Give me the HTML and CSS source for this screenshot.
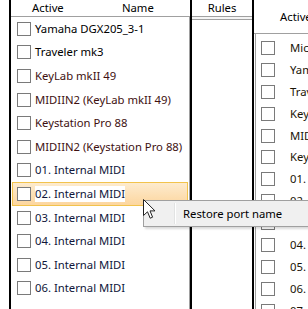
FILE: index.html
```html
<!DOCTYPE html>
<html lang="en">
<head>
  <meta charset="UTF-8" />
  <meta name="viewport" content="width=device-width, initial-scale=1.0"/>
  <title>MIDI Ports</title>
  <link rel="stylesheet" href="styles.css">
</head>
<body>
  <div class="window">
    <div class="gutter"></div>
    <div class="split"></div>

    <!-- Input ports -->
    <div class="panel ports">
      <div class="head">
        <span class="col-active">Active</span>
        <span>Name</span>
      </div>
      <div class="list">
        <div class="row"><span class="check"></span><span class="label">Yamaha DGX205_3-1</span></div>
        <div class="row"><span class="check"></span><span class="label">Traveler mk3</span></div>
        <div class="row missing"><span class="check"></span><span class="label">KeyLab mkII 49</span></div>
        <div class="row missing"><span class="check"></span><span class="label">MIDIIN2 (KeyLab mkII 49)</span></div>
        <div class="row missing"><span class="check"></span><span class="label">Keystation Pro 88</span></div>
        <div class="row missing"><span class="check"></span><span class="label">MIDIIN2 (Keystation Pro 88)</span></div>
        <div class="row internal"><span class="check"></span><span class="label">01. Internal MIDI</span></div>
        <div class="row internal selected"><span class="check"></span><span class="label">02. Internal MIDI</span></div>
        <div class="row internal"><span class="check"></span><span class="label">03. Internal MIDI</span></div>
        <div class="row internal"><span class="check"></span><span class="label">04. Internal MIDI</span></div>
        <div class="row internal"><span class="check"></span><span class="label">05. Internal MIDI</span></div>
        <div class="row internal"><span class="check"></span><span class="label">06. Internal MIDI</span></div>
      </div>
    </div>

    <div class="split"></div>

    <!-- Rules -->
    <div class="panel rules">
      <div class="head center">Rules</div>
      <div class="empty-row"></div>
    </div>

    <div class="split"></div>

    <!-- Output ports -->
    <div class="panel outputs">
      <div class="head tall"><span>Active</span></div>
      <div class="list">
        <div class="row"><span class="check"></span><span class="label">Microsoft GS Wavetable Synth</span></div>
        <div class="row"><span class="check"></span><span class="label">Yamaha DGX205_3-1</span></div>
        <div class="row"><span class="check"></span><span class="label">Traveler mk3</span></div>
        <div class="row"><span class="check"></span><span class="label">KeyLab mkII 49</span></div>
        <div class="row"><span class="check"></span><span class="label">MIDIOUT2 (KeyLab mkII 49)</span></div>
        <div class="row"><span class="check"></span><span class="label">Keystation Pro 88</span></div>
        <div class="row"><span class="check"></span><span class="label">01. Internal MIDI</span></div>
        <div class="row"><span class="check"></span><span class="label">02. Internal MIDI</span></div>
        <div class="row"><span class="check"></span><span class="label">03. Internal MIDI</span></div>
        <div class="row"><span class="check"></span><span class="label">04. Internal MIDI</span></div>
        <div class="row"><span class="check"></span><span class="label">05. Internal MIDI</span></div>
        <div class="row"><span class="check"></span><span class="label">06. Internal MIDI</span></div>
        <div class="row"><span class="check"></span><span class="label">07. Internal MIDI</span></div>
      </div>
    </div>

    <!-- context menu over the selected port -->
    <div class="menu">
      <div class="menu-icon"></div>
      <div class="menu-text">Restore port name</div>
    </div>

    <svg class="cursor" width="14" height="22" viewBox="0 0 14 22">
      <path d="M0.5 0.5 L0.5 16.5 L4.5 12.8 L7.2 19.2 L9.6 18.2 L7 11.9 L12 11.9 Z" fill="#fff" stroke="#222" stroke-width="1" stroke-linejoin="round"/>
    </svg>
  </div>
</body>
</html>
```

FILE: styles.css
```css
body {
  margin: 0;
  background: #fff;
  font-family: "Noto Sans", "Open Sans", sans-serif;
  font-size: 11.3px;
  color: #000;
}

.window {
  position: relative;
  display: flex;
  width: 308px;
  height: 309px;
  overflow: hidden;
}

.gutter {
  width: 9px;
}

.split {
  width: 2px;
  background: #000;
  flex-shrink: 0;
}

.panel {
  flex-shrink: 0;
  overflow: hidden;
}

.ports {
  width: 179px;
}

.rules {
  width: 60px;
}

.outputs {
  flex: 1;
  min-width: 0;
}

.head {
  height: 16px;
  line-height: 16px;
  border-bottom: 1px solid #a0a0a0;
  white-space: nowrap;
}

.ports .head {
  padding-left: 21px;
}

.col-active {
  display: inline-block;
  width: 87px;
}

.head.center {
  text-align: center;
}

.head.tall {
  height: 33px;
  line-height: 34px;
  padding-left: 26px;
}

.empty-row {
  height: 2px;
  background: #f4f4f4;
  border-bottom: 1px solid #a0a0a0;
}

.ports .list {
  border-right: 1px solid #a0a0a0;
  height: 100%;
}

.outputs .list {
  margin-left: 1px;
  padding-top: 3px;
  border-left: 1px solid #a0a0a0;
  height: 100%;
}

.row {
  display: flex;
  align-items: center;
  height: 23.6px;
  margin: 0 1px;
  padding-left: 5px;
  white-space: nowrap;
}

.outputs .row {
  height: 21.9px;
  margin: 0;
  padding-left: 5px;
}

.check {
  width: 14px;
  height: 14px;
  box-sizing: border-box;
  border: 1px solid #7a7a7a;
  background: #fff;
  flex-shrink: 0;
}

.label {
  margin-left: 4px;
  line-height: 16px;
}

.outputs .label {
  margin-left: 15px;
  color: #1a1406;
}

.missing .label {
  color: #3e1010;
}

.internal .label {
  color: #10163a;
}

.selected {
  background: linear-gradient(#fdecd0, #fcd59d);
  box-shadow: inset 0 0 0 1px #f2c34c;
}

.selected .label {
  background: #fff;
}

.menu {
  position: absolute;
  left: 143px;
  top: 200px;
  width: 200px;
  height: 27px;
  box-sizing: border-box;
  display: flex;
  align-items: center;
  background: #f0f0f0;
  border: 1px solid #a0a0a0;
  box-shadow: 2px 2px 2px rgba(0, 0, 0, 0.15);
}

.menu-icon {
  width: 30px;
  height: 21px;
  border-right: 1px solid #e2e3e3;
  box-shadow: 1px 0 0 #fff;
}

.menu-text {
  margin-left: 8px;
  line-height: 16px;
}

.cursor {
  position: absolute;
  left: 143px;
  top: 199px;
}
```
